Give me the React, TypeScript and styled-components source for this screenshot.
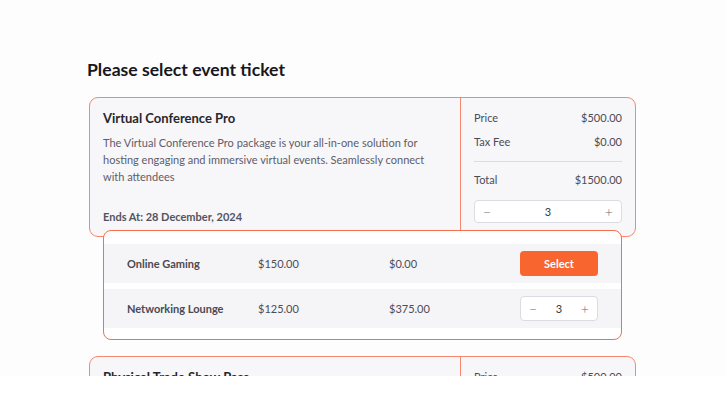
import React from "react";
import styled, { createGlobalStyle } from "styled-components";

const Global = createGlobalStyle`
  html, body { margin: 0; padding: 0; background: #ffffff; }
  body { font-family: Lato, "Noto Sans", sans-serif; -webkit-font-smoothing: antialiased; }
  * { box-sizing: border-box; }
`;

const Viewport = styled.div`
  width: 726px;
  height: 376px;
  overflow: hidden;
  background: #fdfdfd;
`;

const Column = styled.div`
  width: 548px;
  margin-left: 88px;
  padding-top: 58px;
  display: flex;
  flex-direction: column;
`;

const Heading = styled.h1`
  margin: 0 0 15px -1px;
  font-size: 17.6px;
  line-height: 24px;
  font-weight: 700;
  color: #17171c;
`;

const Card = styled.div`
  display: grid;
  grid-template-columns: 1fr 174px;
  background: #f7f6f9;
  border: 1px solid #f7876f;
  border-radius: 9px;
  margin-left: 1px;
`;

const Info = styled.div`
  display: flex;
  flex-direction: column;
  justify-content: space-between;
  padding: 11px 20px 11px 13px;
  border-right: 1.5px solid #f7876f;
`;

const CardTitle = styled.div`
  font-size: 13px;
  line-height: 18px;
  font-weight: 700;
  color: #26262e;
`;

const Desc = styled.p`
  margin: 7px 0 0;
  font-size: 11px;
  line-height: 17px;
  color: #5e5d68;
`;

const Ends = styled.div`
  font-size: 11px;
  line-height: 17px;
  font-weight: 700;
  color: #55545e;
`;

const Summary = styled.div`
  display: flex;
  flex-direction: column;
  padding: 11px 13px 13px 13px;
`;

const Line = styled.div<{ $gap?: number }>`
  display: flex;
  justify-content: space-between;
  font-size: 11px;
  line-height: 18px;
  color: #4c4b55;
  margin-top: ${(p) => p.$gap ?? 0}px;
`;

const Rule = styled.hr`
  border: none;
  border-top: 1px solid #dddce2;
  margin: 10px 0 0;
`;

const StepperSlot = styled.div`
  margin-top: 11px;
`;

const Stepper = styled.div<{ $w?: number; $h?: number }>`
  display: flex;
  align-items: center;
  justify-content: space-between;
  width: ${(p) => (p.$w ? `${p.$w}px` : "100%")};
  height: ${(p) => p.$h ?? 23}px;
  padding: 0 8px;
  background: #ffffff;
  border: 1px solid #dcdbe1;
  border-radius: 4px;
  font-size: 11px;
  color: #3a3942;
`;

const StepBtn = styled.span`
  font-size: 14px;
  line-height: 1;
  color: #6a6972;
  font-weight: 300;
`;

const Options = styled.div`
  position: relative;
  z-index: 2;
  margin: -7px 14px 0 15px;
  background: #ffffff;
  border: 1.5px solid #f46f4e;
  border-radius: 8px;
  padding: 13px 0 11px;
  display: flex;
  flex-direction: column;
  gap: 6px;
`;

const OptionRow = styled.div<{ $h: number }>`
  display: grid;
  grid-template-columns: 131px 131px 1fr 78px;
  align-items: center;
  height: ${(p) => p.$h}px;
  padding: 0 23px 0 23px;
  background: #f5f4f7;
  font-size: 11px;
  color: #4d4c55;
`;

const OptName = styled.span`
  font-weight: 700;
  color: #4a4952;
`;

const SelectButton = styled.button`
  width: 78px;
  height: 25px;
  border: none;
  border-radius: 4px;
  background: #f8652f;
  color: #ffffff;
  font-family: Lato, "Noto Sans", sans-serif;
  font-size: 11px;
  font-weight: 700;
  cursor: pointer;
`;

const Spacer = styled.div`
  height: 16px;
`;

type Ticket = {
  title: string;
  desc: string;
  ends: string;
  price: string;
  tax: string;
  total: string;
  qty: number;
};

const tickets: Ticket[] = [
  {
    title: "Virtual Conference Pro",
    desc:
      "The Virtual Conference Pro package is your all-in-one solution for hosting engaging and immersive virtual events. Seamlessly connect with attendees",
    ends: "Ends At: 28 December, 2024",
    price: "$500.00",
    tax: "$0.00",
    total: "$1500.00",
    qty: 3,
  },
  {
    title: "Physical Trade Show Pass",
    desc:
      "Get full access to the exhibition floor, keynote sessions and networking areas of the physical trade show.",
    ends: "Ends At: 28 December, 2024",
    price: "$500.00",
    tax: "$0.00",
    total: "$500.00",
    qty: 1,
  },
];

const TicketCard: React.FC<{ t: Ticket }> = ({ t }) => (
  <Card>
    <Info>
      <div>
        <CardTitle>{t.title}</CardTitle>
        <Desc>{t.desc}</Desc>
      </div>
      <Ends>{t.ends}</Ends>
    </Info>
    <Summary>
      <Line>
        <span>Price</span>
        <span>{t.price}</span>
      </Line>
      <Line $gap={6}>
        <span>Tax Fee</span>
        <span>{t.tax}</span>
      </Line>
      <Rule />
      <Line $gap={9}>
        <span>Total</span>
        <span>{t.total}</span>
      </Line>
      <StepperSlot>
        <Stepper>
          <StepBtn>−</StepBtn>
          <span>{t.qty}</span>
          <StepBtn>+</StepBtn>
        </Stepper>
      </StepperSlot>
    </Summary>
  </Card>
);

export default function App() {
  return (
    <>
      <Global />
      <Viewport>
        <Column>
          <Heading>Please select event ticket</Heading>
          <TicketCard t={tickets[0]} />
          <Options>
            <OptionRow $h={39}>
              <OptName>Online Gaming</OptName>
              <span>$150.00</span>
              <span>$0.00</span>
              <SelectButton>Select</SelectButton>
            </OptionRow>
            <OptionRow $h={39}>
              <OptName>Networking Lounge</OptName>
              <span>$125.00</span>
              <span>$375.00</span>
              <Stepper $w={78} $h={25}>
                <StepBtn>−</StepBtn>
                <span>3</span>
                <StepBtn>+</StepBtn>
              </Stepper>
            </OptionRow>
          </Options>
          <Spacer />
          <TicketCard t={tickets[1]} />
        </Column>
      </Viewport>
    </>
  );
}
